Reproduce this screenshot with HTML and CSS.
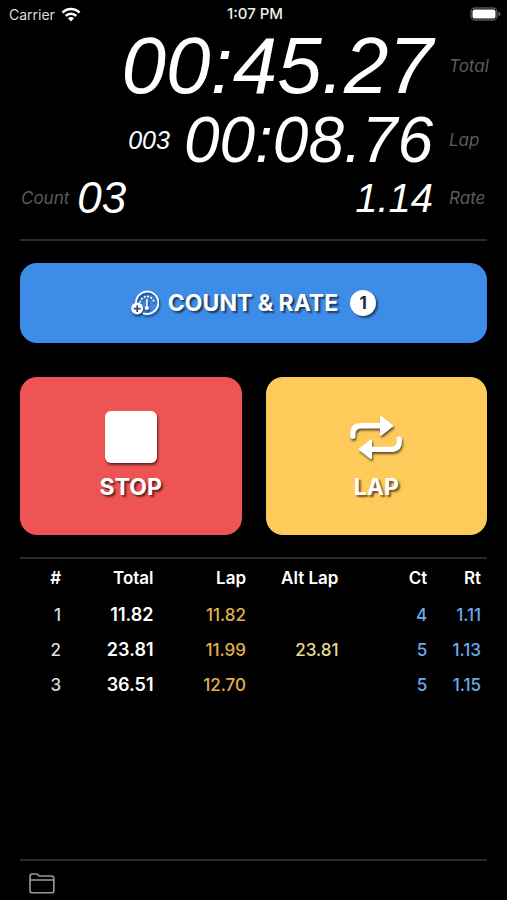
FILE: index.html
```html
<!DOCTYPE html>
<html lang="en">
<head>
<meta charset="utf-8">
<meta name="viewport" content="width=device-width, initial-scale=1">
<title>Stopwatch</title>
<link rel="stylesheet" href="styles.css">
</head>
<body>
<header class="status">
  <div class="carrier">Carrier
    <svg width="20" height="15" viewBox="0 0 20 15" aria-hidden="true"><g fill="none" stroke="#fff" stroke-width="2.6"><path d="M1.5 5.6C6.2 .8 13.8 .8 18.5 5.6"/><path d="M4.7 8.9C7.7 6 12.3 6 15.3 8.9"/></g><path fill="#fff" d="M6.9 11.2C8.7 9.6 11.3 9.6 13.1 11.2L10 14.4Z"/></svg>
  </div>
  <div class="clock">1:07 PM</div>
  <div class="battery">
    <svg width="31" height="14" viewBox="0 0 31 14" aria-hidden="true"><rect x="1" y="1" width="26" height="12" rx="4" fill="none" stroke="#555" stroke-width="1.5"/><rect x="2.5" y="2.5" width="23" height="9" rx="2" fill="#fff"/><path d="M28.5 4.5Q30.5 5.3 30.5 7T28.5 9.5Z" fill="#666"/></svg>
  </div>
</header>
<main>
  <section class="readouts" aria-label="Times">
    <div class="readout total"><span class="digits">00:45.27</span><span class="caption">Total</span></div>
    <div class="readout lap"><span class="number">003</span><span class="digits">00:08.76</span><span class="caption">Lap</span></div>
    <div class="readout counts"><span class="caption count">Count</span><span class="digits">03</span><span class="digits rate">1.14</span><span class="caption">Rate</span></div>
  </section>
  <div class="actions">
    <button class="btn wide" type="button">
      <svg width="28" height="26" viewBox="0 0 28 26" aria-hidden="true"><g fill="none" stroke="#fff" stroke-linecap="round"><path stroke-width="1.9" d="M5 12.2A11.2 11.2 0 1 1 12.7 23.4"/><path stroke-width="2" stroke-dasharray=".1 3.3" d="M9.2 11.8A7 7 0 0 1 22.8 11.8"/><path stroke-width="1.6" d="M15.9 9.5V17"/></g><circle cx="15.9" cy="18" r="2.1" fill="#fff"/><circle cx="6.2" cy="18.6" r="6" fill="#fff"/><path d="M6.2 15.2V22M2.8 18.6H9.6" stroke="#1f4d82" stroke-width="1.7"/></svg>
      <span>COUNT &amp; RATE</span>
      <span class="badge">1</span>
    </button>
    <div class="pair">
      <button class="btn stop" type="button">
        <svg width="52" height="52" viewBox="0 0 52 52" aria-hidden="true"><rect width="52" height="52" rx="6" fill="#fff"/></svg>
        <span>STOP</span>
      </button>
      <button class="btn again" type="button">
        <svg width="52" height="52" viewBox="0 0 52 52" aria-hidden="true"><g fill="none" stroke="#fff" stroke-width="5.4" stroke-linecap="round"><path d="M2.8 25.2V23Q2.8 14.8 11.5 14.8H31"/><path d="M49.2 28.2V30.5Q49.2 38.4 40.5 38.4H21"/></g><g fill="#fff" stroke="#fff" stroke-width="2" stroke-linejoin="round"><path d="M31 6L42.5 14.8L31 23.6Z"/><path d="M21 29.6L9.8 38.4L21 47.2Z"/></g></svg>
        <span>LAP</span>
      </button>
    </div>
  </div>
  <section class="laps">
    <table>
      <thead><tr><th class="num">#</th><th class="time">Total</th><th class="time">Lap</th><th class="time">Alt Lap</th><th class="ct">Ct</th><th class="rt">Rt</th></tr></thead>
      <tbody>
        <tr><td>1</td><td class="sum">11.82</td><td class="split">11.82</td><td></td><td class="blue">4</td><td class="blue rt">1.11</td></tr>
        <tr><td>2</td><td class="sum">23.81</td><td class="split">11.99</td><td class="alt">23.81</td><td class="blue">5</td><td class="blue rt">1.13</td></tr>
        <tr><td>3</td><td class="sum">36.51</td><td class="split">12.70</td><td></td><td class="blue">5</td><td class="blue rt">1.15</td></tr>
      </tbody>
    </table>
  </section>
</main>
<footer>
  <button class="folder" type="button" aria-label="Open files">
    <svg width="26" height="21" viewBox="0 0 26 21" aria-hidden="true"><path fill="none" stroke="#999" stroke-width="1.6" stroke-linejoin="round" d="M1 17.4V3.4Q1 1 3.4 1H7.2Q8.4 1 9.1 1.9T11 3H22.4Q24.8 3 24.8 5.4V17.4Q24.8 19.8 22.4 19.8H3.4Q1 19.8 1 17.4ZM1 7H24.8"/></svg>
  </button>
</footer>
</body>
</html>
```
FILE: styles.css
```css
* { box-sizing: border-box; }

body {
  margin: 0;
  min-height: 100vh;
  display: flex;
  flex-direction: column;
  background: #000;
  color: #fff;
  font-family: Inter, "Liberation Sans", sans-serif;
  font-size: 17px;
}

svg { display: block; flex: none; }

.status {
  display: grid;
  grid-template-columns: 1fr auto 1fr;
  align-items: center;
  height: 28px;
  padding: 0 6px 0 9px;
  font-size: 14px;
}
.carrier { display: flex; align-items: center; gap: 6px; color: #ddd; }
.clock { font-size: 15px; font-weight: 500; line-height: 16px; color: #eee; }
.battery { justify-self: end; }

main { flex: 1; padding: 0 20px; }

.readouts {
  display: flex;
  flex-direction: column;
  padding-bottom: 20px;
  border-bottom: 2px solid #2a2a2a;
}
.readout { display: flex; align-items: center; justify-content: flex-end; }
.digits, .number {
  font-family: "Liberation Sans", sans-serif;
  font-style: italic;
  line-height: 1;
}
.caption {
  width: 54px;
  padding-left: 16px;
  font-style: italic;
  color: #5c5c5c;
}
.total { height: 75px; }
.total .digits { font-size: 80px; }
.lap { height: 74px; }
.lap .digits { font-size: 64px; }
.number { font-size: 25px; margin-right: 14px; }
.counts { height: 42px; }
.counts .digits { font-size: 44px; }
.counts .rate { font-size: 40px; margin-left: auto; }
.caption.count { width: auto; padding: 0 8px 0 1px; }

.actions { display: flex; flex-direction: column; gap: 34px; padding: 22px 0; }
.pair { display: grid; grid-template-columns: 1fr 1fr; gap: 24px; }
.btn {
  display: flex;
  align-items: center;
  justify-content: center;
  border: 0;
  border-radius: 17px;
  color: #fff;
  font: 700 23px/28px Inter, "Liberation Sans", sans-serif;
  text-shadow: 2px 2px 2px rgba(0, 0, 0, .6);
}
.btn svg { filter: drop-shadow(1px 2px 1px rgba(0, 0, 0, .6)); }
.wide { height: 80px; gap: 9px; background: #3d8de8; }
.badge {
  width: 26px;
  height: 26px;
  margin-left: 3px;
  border-radius: 50%;
  background: #fff;
  color: #1d2b3d;
  font-size: 17px;
  line-height: 26px;
  text-shadow: none;
  box-shadow: 2px 2px 2px rgba(0, 0, 0, .5);
}
.stop, .again { flex-direction: column; gap: 10px; height: 158px; }
.stop { background: #ee5454; }
.again { background: #fecb5a; }

.laps { border-top: 2px solid #2a2a2a; }
table { width: 100%; table-layout: fixed; border-collapse: collapse; }
th, td { padding: 0; height: 35px; text-align: right; font-weight: 500; color: #dcdcdc; }
th { height: 38px; font-weight: 600; color: #fff; }
.num { width: 8.8%; }
.time { width: 19.8%; }
.ct { width: 19%; }
.rt { padding-right: 6px; }
.sum { font-size: 18px; font-weight: 600; color: #fff; }
.split { color: #e3b04a; }
.alt { color: #e8dc93; }
.blue { color: #6cacea; }

footer {
  margin: 0 20px;
  height: 41px;
  border-top: 2px solid #2a2a2a;
}
.folder { padding: 12px 9px 0; border: 0; background: none; }
```
